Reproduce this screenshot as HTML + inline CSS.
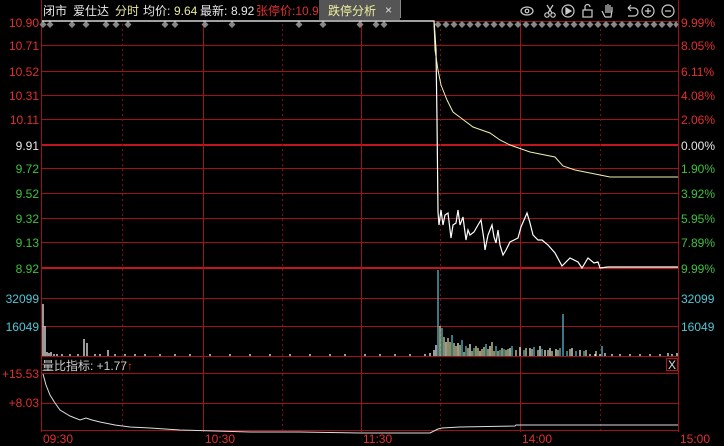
<!DOCTYPE html>
<html><head><meta charset="utf-8"><style>
body{margin:0;background:#000;width:724px;height:446px;overflow:hidden;font-family:"Liberation Sans","Noto Sans CJK SC",sans-serif}
svg{display:block}
text{font-family:"Liberation Sans","Noto Sans CJK SC",sans-serif;font-size:12px}
</style></head><body>
<svg width="724" height="446" viewBox="0 0 724 446">
<rect width="724" height="446" fill="#000"/>
<!-- horizontal grid -->
<g stroke="#a01218" stroke-width="1">
<line x1="42" y1="45.5" x2="678" y2="45.5"/>
<line x1="42" y1="71.5" x2="678" y2="71.5"/>
<line x1="42" y1="95.5" x2="678" y2="95.5"/>
<line x1="42" y1="119.5" x2="678" y2="119.5"/>
<line x1="42" y1="168.5" x2="678" y2="168.5"/>
<line x1="42" y1="193.5" x2="678" y2="193.5"/>
<line x1="42" y1="218.5" x2="678" y2="218.5"/>
<line x1="42" y1="242.5" x2="678" y2="242.5"/>
<line x1="42" y1="298.5" x2="678" y2="298.5"/>
<line x1="42" y1="326.5" x2="678" y2="326.5"/>
<line x1="42" y1="356.5" x2="678" y2="356.5"/>
<line x1="42" y1="373.5" x2="678" y2="373.5"/>
<line x1="42" y1="403.5" x2="678" y2="403.5"/>
<line x1="42" y1="430.5" x2="678" y2="430.5"/>
<line x1="434" y1="21.5" x2="678" y2="21.5"/>
</g>
<g stroke="#c0161c" stroke-width="2">
<line x1="42" y1="145" x2="678" y2="145"/>
<line x1="42" y1="268" x2="678" y2="268"/>
</g>
<!-- vertical grid -->
<g stroke="#a01218" stroke-width="1">
<line x1="41.5" y1="0" x2="41.5" y2="432"/>
<line x1="203.5" y1="20" x2="203.5" y2="432"/>
<line x1="361.5" y1="20" x2="361.5" y2="432"/>
<line x1="520.5" y1="20" x2="520.5" y2="432"/>
<line x1="678.5" y1="0" x2="678.5" y2="432"/>
</g>
<g stroke="#7a1014" stroke-width="1" stroke-dasharray="2,3">
<line x1="122.5" y1="24" x2="122.5" y2="430"/>
<line x1="282.5" y1="24" x2="282.5" y2="430"/>
<line x1="440.5" y1="24" x2="440.5" y2="430"/>
<line x1="600.5" y1="24" x2="600.5" y2="430"/>
</g>
<!-- header -->
<text x="43" y="15" fill="#e8e8e8">闭市</text>
<text x="73" y="15" fill="#e8e8e8">爱仕达</text>
<text x="115" y="15" fill="#e8e8a0">分时</text>
<text x="143" y="15" fill="#e8e8e8">均价:</text><text x="174" y="15" fill="#e8e8a0">9.64</text>
<text x="200" y="15" fill="#e8e8e8">最新:</text><text x="231" y="15" fill="#e8e8e8">8.92</text>
<text x="256" y="15" fill="#e03030">张停价:10.9</text>
<rect x="319" y="0" width="81" height="20" fill="#555"/>
<text x="328" y="15" fill="#f0f0a0" font-size="13">跌停分析</text>
<text x="385" y="14" fill="#ddd" font-size="13">×</text>
<line x1="400.5" y1="0" x2="400.5" y2="18" stroke="#888"/>
<!-- toolbar icons -->
<g stroke="#ccc" fill="none" stroke-width="1.2">
<ellipse cx="527" cy="11" rx="6" ry="4"/><circle cx="527" cy="11" r="1.8"/>
<circle cx="547" cy="15" r="2.2"/><circle cx="553" cy="15" r="2.2"/><path d="M548 13 L553 5 M552 13 L547 5"/>
<circle cx="568" cy="11" r="6"/><path d="M566 8 L571 11 L566 14Z" fill="#ccc"/>
<rect x="583" y="10" width="9" height="7"/><path d="M585 10 V7 a2.5 2.5 0 0 1 5 0"/>
<path d="M605 17 L602 11 M605 17 h6 l1 -7 M606 13 V5 M608 13 V4 M610 13 V5 M612 12 V7"/>
<path d="M628 8 h6 a4 4 0 0 1 0 8 h-6 M628 8 l3 -3 M628 8 l3 3"/>
<circle cx="648" cy="11" r="6"/><path d="M645 11 h6 M648 8 v6"/>
<circle cx="668" cy="11" r="6"/><path d="M665 11 h6"/>
</g>
<!-- diamonds -->
<g fill="#888">
<path d="M43 21l3.5 3.5-3.5 3.5-3.5-3.5z M50 21l3.5 3.5-3.5 3.5-3.5-3.5z M72 21l3.5 3.5-3.5 3.5-3.5-3.5z M86 21l3.5 3.5-3.5 3.5-3.5-3.5z M106 21l3.5 3.5-3.5 3.5-3.5-3.5z M116 21l3.5 3.5-3.5 3.5-3.5-3.5z M128 21l3.5 3.5-3.5 3.5-3.5-3.5z M165 21l3.5 3.5-3.5 3.5-3.5-3.5z M175 21l3.5 3.5-3.5 3.5-3.5-3.5z M205 21l3.5 3.5-3.5 3.5-3.5-3.5z M232 21l3.5 3.5-3.5 3.5-3.5-3.5z M299 21l3.5 3.5-3.5 3.5-3.5-3.5z M323 21l3.5 3.5-3.5 3.5-3.5-3.5z M360 21l3.5 3.5-3.5 3.5-3.5-3.5z M376 21l3.5 3.5-3.5 3.5-3.5-3.5z M384 21l3.5 3.5-3.5 3.5-3.5-3.5z"/>
<path d="M438 21l3.5 3.5-3.5 3.5-3.5-3.5zM446 21l3.5 3.5-3.5 3.5-3.5-3.5zM454 21l3.5 3.5-3.5 3.5-3.5-3.5zM462 21l3.5 3.5-3.5 3.5-3.5-3.5zM470 21l3.5 3.5-3.5 3.5-3.5-3.5zM478 21l3.5 3.5-3.5 3.5-3.5-3.5zM486 21l3.5 3.5-3.5 3.5-3.5-3.5zM494 21l3.5 3.5-3.5 3.5-3.5-3.5zM502 21l3.5 3.5-3.5 3.5-3.5-3.5zM510 21l3.5 3.5-3.5 3.5-3.5-3.5zM518 21l3.5 3.5-3.5 3.5-3.5-3.5zM526 21l3.5 3.5-3.5 3.5-3.5-3.5zM534 21l3.5 3.5-3.5 3.5-3.5-3.5zM542 21l3.5 3.5-3.5 3.5-3.5-3.5zM550 21l3.5 3.5-3.5 3.5-3.5-3.5zM558 21l3.5 3.5-3.5 3.5-3.5-3.5zM566 21l3.5 3.5-3.5 3.5-3.5-3.5zM574 21l3.5 3.5-3.5 3.5-3.5-3.5zM582 21l3.5 3.5-3.5 3.5-3.5-3.5zM590 21l3.5 3.5-3.5 3.5-3.5-3.5zM598 21l3.5 3.5-3.5 3.5-3.5-3.5zM606 21l3.5 3.5-3.5 3.5-3.5-3.5zM614 21l3.5 3.5-3.5 3.5-3.5-3.5zM622 21l3.5 3.5-3.5 3.5-3.5-3.5zM630 21l3.5 3.5-3.5 3.5-3.5-3.5zM638 21l3.5 3.5-3.5 3.5-3.5-3.5zM646 21l3.5 3.5-3.5 3.5-3.5-3.5zM654 21l3.5 3.5-3.5 3.5-3.5-3.5zM662 21l3.5 3.5-3.5 3.5-3.5-3.5zM670 21l3.5 3.5-3.5 3.5-3.5-3.5zM676 21l2.5 3.5-2.5 3.5-2.5-3.5z"/>
</g>
<!-- left labels -->
<g text-anchor="end" font-size="12">
<text x="39" y="27" fill="#e03030">10.90</text>
<text x="39" y="50" fill="#e03030">10.71</text>
<text x="39" y="76" fill="#e03030">10.52</text>
<text x="39" y="100" fill="#e03030">10.31</text>
<text x="39" y="124" fill="#e03030">10.11</text>
<text x="39" y="150" fill="#e8e8e8">9.91</text>
<text x="39" y="173" fill="#3ec23e">9.72</text>
<text x="39" y="198" fill="#3ec23e">9.52</text>
<text x="39" y="223" fill="#3ec23e">9.32</text>
<text x="39" y="247" fill="#3ec23e">9.13</text>
<text x="39" y="273" fill="#3ec23e">8.92</text>
<text x="39" y="303" fill="#4fc8d8">32099</text>
<text x="39" y="331" fill="#4fc8d8">16049</text>
<text x="39" y="378" fill="#e03030">+15.53</text>
<text x="39" y="407" fill="#e03030">+8.03</text>
</g>
<g font-size="12">
<text x="681" y="27" fill="#e03030">9.99%</text>
<text x="681" y="50" fill="#e03030">8.05%</text>
<text x="681" y="76" fill="#e03030">6.11%</text>
<text x="681" y="100" fill="#e03030">4.08%</text>
<text x="681" y="124" fill="#e03030">2.06%</text>
<text x="681" y="150" fill="#e8e8e8">0.00%</text>
<text x="681" y="173" fill="#3ec23e">1.90%</text>
<text x="681" y="198" fill="#3ec23e">3.92%</text>
<text x="681" y="223" fill="#3ec23e">5.95%</text>
<text x="681" y="247" fill="#3ec23e">7.89%</text>
<text x="681" y="273" fill="#3ec23e">9.99%</text>
<text x="681" y="303" fill="#4fc8d8">32099</text>
<text x="681" y="331" fill="#4fc8d8">16049</text>
</g>
<!-- time labels -->
<g font-size="12" fill="#e03030">
<text x="43" y="443">09:30</text>
<text x="205" y="443">10:30</text>
<text x="363" y="443">11:30</text>
<text x="522" y="443">14:00</text>
<text x="680" y="443">15:00</text>
</g>
<!-- price lines -->
<polyline fill="none" stroke="#fff" stroke-width="1.2" points="42,21 434,21 436,50 437,120 438,212 439,225 441,210 443,225 445,215 448,213 451,238 453,225 456,223 458,210 460,225 463,217 466,240 468,230 470,235 474,232 478,225 481,220 484,240 485,250 488,235 490,230 492,225 494,237 496,243 498,230 500,245 503,255 506,250 510,242 514,240 518,238 521,227 524,220 527,213 530,223 533,235 538,240 542,240 548,245 555,253 562,266 570,258 578,262 582,268 588,258 594,263 598,262 600,268 608,267 678,267"/>
<polyline fill="none" stroke="#f0f0b0" stroke-width="1" points="434,22 435,50 438,70 441,85 447,100 453,112 461,118 473,127 490,133 500,140 510,145 530,152 555,157 563,166 575,170 610,177 678,177"/>
<!-- volume -->
<path fill="none" stroke="#fff" stroke-width="1.2" d="M43 356V304M45 356V326M47 356V352M49 356V353M51 356V352M54 356V354M57 356V354M84 356V339M87 356V343M108 356V350M62 356V354M70 356V354M78 356V354M95 356V354M100 356V354M115 356V354M125 356V354M135 356V354M145 356V354M160 356V354M175 356V354M190 356V354M210 356V354M230 356V354M250 356V354M270 356V354M290 356V354M310 356V354M330 356V354M345 356V354M365 356V354M380 356V354M395 356V354M410 356V354M425 356V354M430 356V353 M434 356V350M436 356V345M446 356V342M458 356V343M470 356V344M480 356V351M490 356V346M510 356V348M520 356V347M530 356V348M540 356V346M545 356V350M550 356V348M556 356V349M572 356V348M580 356V350M590 356V354M595 356V354M600 356V354M605 356V353M612 356V354M620 356V354M630 356V354M640 356V354M650 356V354M660 356V354M668 356V353M672 356V354M677 356V353"/>
<path fill="none" stroke="#5fc8d8" stroke-width="1.2" d="M438 356V270M442 356V328M452 356V335M462 356V340M466 356V346M474 356V348M486 356V344M496 356V346M500 356V350M504 356V349M512 356V346M524 356V350M534 356V347M542 356V349M560 356V348M563 356V314M567 356V351M576 356V351M584 356V351M602 356V346"/>
<path fill="none" stroke="#e8e8a0" stroke-width="1.2" d="M440 356V326M444 356V337M448 356V338M450 356V342M454 356V343M456 356V346M460 356V345M464 356V352M468 356V348M472 356V351M476 356V346M478 356V348M482 356V349M484 356V347M488 356V349M492 356V342M494 356V351M498 356V351M502 356V348M506 356V350M508 356V349M516 356V350M526 356V348M532 356V349M538 356V350M548 356V350M552 356V351M558 356V350M570 356V349M586 356V350M596 356V351"/>
<!-- indicator header -->
<text x="42" y="370" fill="#ccc">量比指标: +1.77<tspan fill="#e03030">↑</tspan></text>
<rect x="666.5" y="358.5" width="11" height="12" fill="none" stroke="#b0141a"/>
<text x="668" y="369" fill="#ddd" font-size="11">X</text>
<polyline fill="none" stroke="#ddd" stroke-width="1" points="43,374 46,385 50,395 55,403 60,410 70,416 80,420 86,418 92,420 100,422 115,425 130,427 150,428 180,430 250,432 300,432 360,433 430,433 438,429 442,428 460,427 515,426 516,425 678,425"/>
</svg>
</body></html>
